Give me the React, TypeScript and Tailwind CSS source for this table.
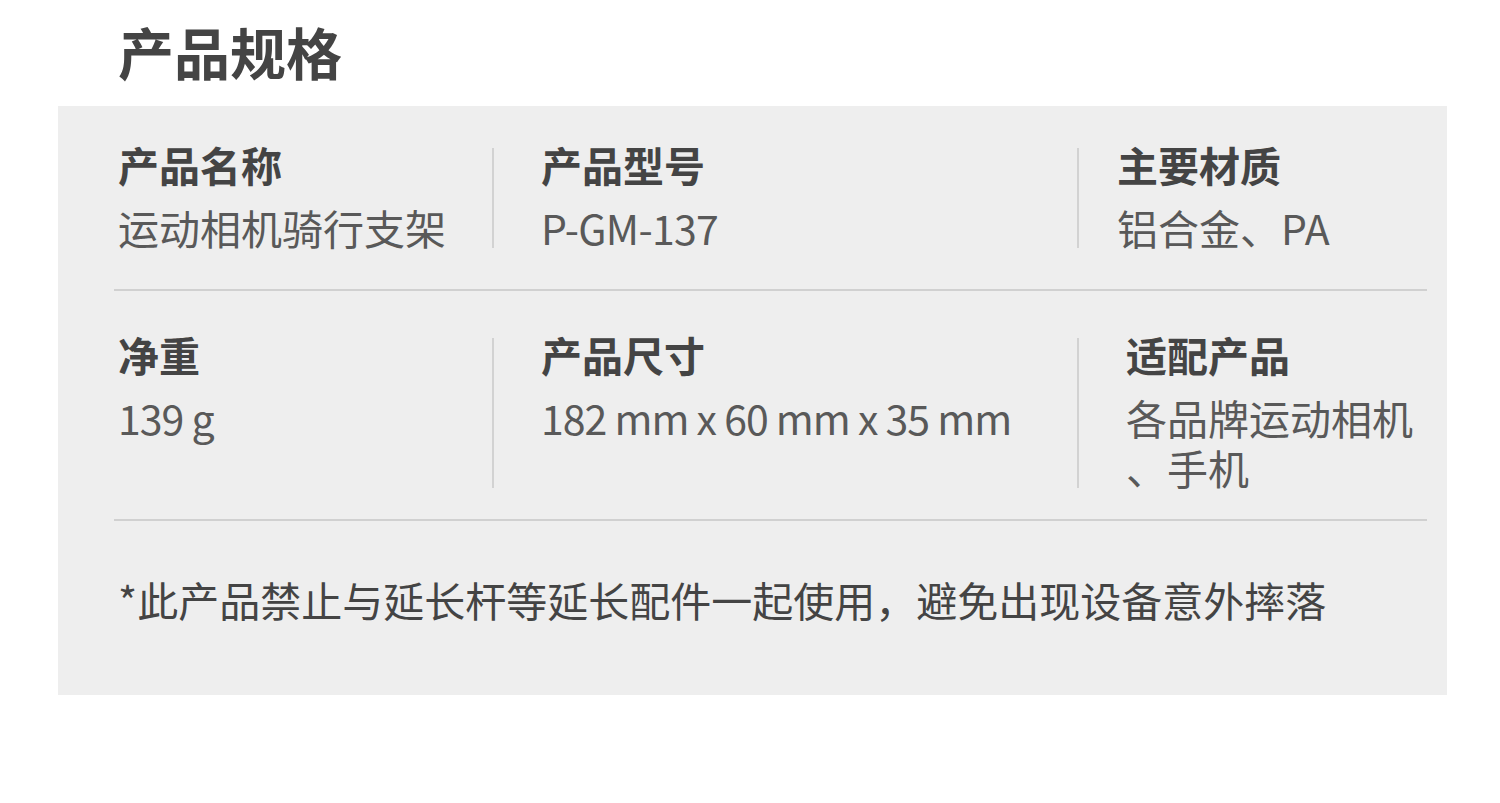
const font = "font-['Noto_Sans_CJK_SC','Noto_Sans',sans-serif]";

function Cell({ label, children, pl }: { label: string; children: React.ReactNode; pl: string }) {
  return (
    <div className={`${pl} min-w-0`}>
      <div className="text-[41px] leading-[40px] font-bold text-[#444]">{label}</div>
      <div className="mt-[18px] text-[41px] leading-[50px] text-[#595959]">{children}</div>
    </div>
  );
}

function VLine() {
  return <div className="w-[2px] bg-[#d2d2d2] my-[4px] shrink-0" />;
}

export default function App() {
  return (
    <div className={`w-[1500px] h-[803px] bg-white ${font}`}>
      <h2 className="pt-[16px] pl-[118px] text-[56px] leading-[70px] font-bold text-[#444]">产品规格</h2>

      <div className="mt-[20px] ml-[58px] w-[1389px] h-[589px] bg-[#eeeeee] pl-[56px] pr-[20px] pt-[38px]">
        {/* 第一行 */}
        <div className="flex pl-[4px] pb-[37px] border-b-2 border-[#d0d0d0]">
          <Cell label="产品名称" pl="w-[374px]">运动相机骑行支架</Cell>
          <VLine />
          <Cell label="产品型号" pl="w-[583px] pl-[47px]">
            <span className="tracking-[-0.7px]">P-GM-137</span>
          </Cell>
          <VLine />
          <Cell label="主要材质" pl="flex-1 pl-[38px]">铝合金、PA</Cell>
        </div>

        {/* 第二行 */}
        <div className="flex pl-[4px] pt-[43px] pb-[27px] border-b-2 border-[#d0d0d0]">
          <Cell label="净重" pl="w-[374px]">
            <span className="tracking-[-1px]">139 g</span>
          </Cell>
          <VLine />
          <Cell label="产品尺寸" pl="w-[583px] pl-[47px]">
            <span className="tracking-[-1px]">182 mm x 60 mm x 35 mm</span>
          </Cell>
          <VLine />
          <Cell label="适配产品" pl="flex-1 pl-[47px]">
            各品牌运动相机
            <br />
            、手机
          </Cell>
        </div>

        <p className="pl-[4px] pt-[53px] text-[41px] leading-[50px] text-[#444]">
          *此产品禁止与延长杆等延长配件一起使用，避免出现设备意外摔落
        </p>
      </div>
    </div>
  );
}
